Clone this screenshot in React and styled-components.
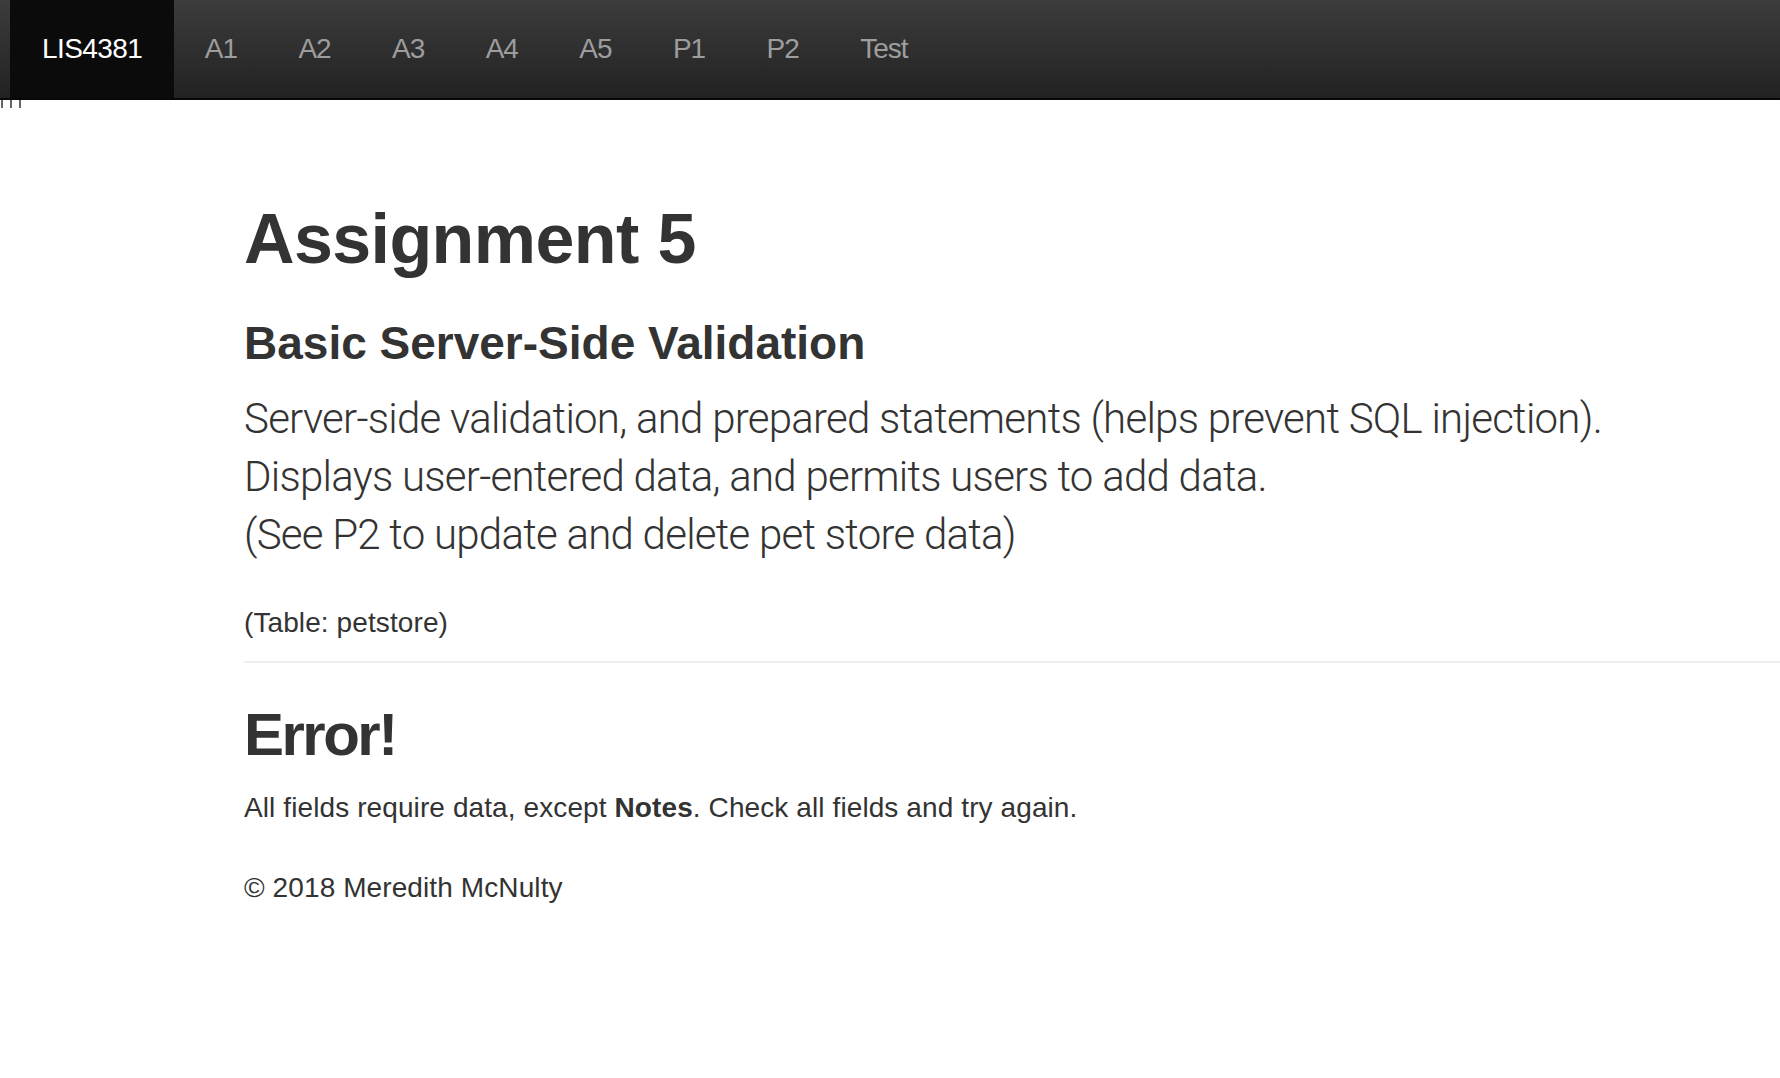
import React from "react";
import styled, { createGlobalStyle } from "styled-components";

const GlobalStyle = createGlobalStyle`
  html, body {
    margin: 0;
    padding: 0;
    background: #fff;
  }
  body {
    font-family: "Liberation Sans", Arial, sans-serif;
    color: #333;
  }
`;

const Page = styled.div`
  position: relative;
  min-height: 1078px;
  overflow: hidden;
`;

const Navbar = styled.nav`
  display: flex;
  align-items: stretch;
  height: 98px;
  padding-left: 10px;
  background: linear-gradient(to bottom, #3c3c3c 0%, #222 100%);
  border-bottom: 2px solid #080808;
`;

const NavItem = styled.a`
  display: flex;
  align-items: center;
  padding: ${(p) => (p.$brand ? "0 32px 0 32px" : "0 30.7px")};
  font-size: 28px;
  letter-spacing: ${(p) => (p.$brand ? "-0.6px" : "-1px")};
  color: ${(p) => (p.$brand ? "#fff" : "#9d9d9d")};
  background: ${(p) => (p.$brand ? "#0b0b0b" : "transparent")};
  text-decoration: none;
  cursor: pointer;
`;

const ToggleBits = styled.div`
  position: absolute;
  top: 100px;
  left: 1px;
  display: flex;
  gap: 7px;
`;

const Bit = styled.span`
  width: 2px;
  height: 8px;
  background: #666;
`;

const Content = styled.main`
  padding: 101px 0 0 244px;
`;

const Title = styled.h1`
  margin: 0;
  font-size: 70px;
  line-height: 77px;
  font-weight: 700;
  letter-spacing: -0.6px;
`;

const Subtitle = styled.h2`
  margin: 41px 0 0;
  font-size: 46px;
  line-height: 49.5px;
  font-weight: 700;
  letter-spacing: 0;
`;

const Lead = styled.p`
  margin: 21.5px 0 0;
  font-family: Roboto, "Liberation Sans", sans-serif;
  font-weight: 300;
  font-size: 42px;
  line-height: 58px;
  letter-spacing: -0.75px;
`;

const Small = styled.p`
  margin: ${(p) => p.$mt || "0"} 0 0;
  font-size: 28px;
  line-height: 38px;
  letter-spacing: 0.1px;
`;

const Rule = styled.hr`
  margin: 19px 0 0;
  border: 0;
  border-top: 2px solid #eee;
  height: 0;
`;

const ErrorTitle = styled.h2`
  margin: 39px 0 0;
  font-size: 60px;
  line-height: 66px;
  font-weight: 700;
  letter-spacing: -2.5px;
`;

const navItems = ["A1", "A2", "A3", "A4", "A5", "P1", "P2", "Test"];

export default function App() {
  return (
    <Page>
      <GlobalStyle />
      <Navbar>
        <NavItem $brand>LIS4381</NavItem>
        {navItems.map((item) => (
          <NavItem key={item}>{item}</NavItem>
        ))}
      </Navbar>
      <ToggleBits>
        <Bit />
        <Bit />
        <Bit />
      </ToggleBits>
      <Content>
        <Title>Assignment 5</Title>
        <Subtitle>Basic Server-Side Validation</Subtitle>
        <Lead>
          Server-side validation, and prepared statements (helps prevent SQL injection).
          <br />
          Displays user-entered data, and permits users to add data.
          <br />
          (See P2 to update and delete pet store data)
        </Lead>
        <Small $mt="40px">(Table: petstore)</Small>
        <Rule />
        <ErrorTitle>Error!</ErrorTitle>
        <Small $mt="21px">
          All fields require data, except <b>Notes</b>. Check all fields and try again.
        </Small>
        <Small $mt="42px">© 2018 Meredith McNulty</Small>
      </Content>
    </Page>
  );
}
